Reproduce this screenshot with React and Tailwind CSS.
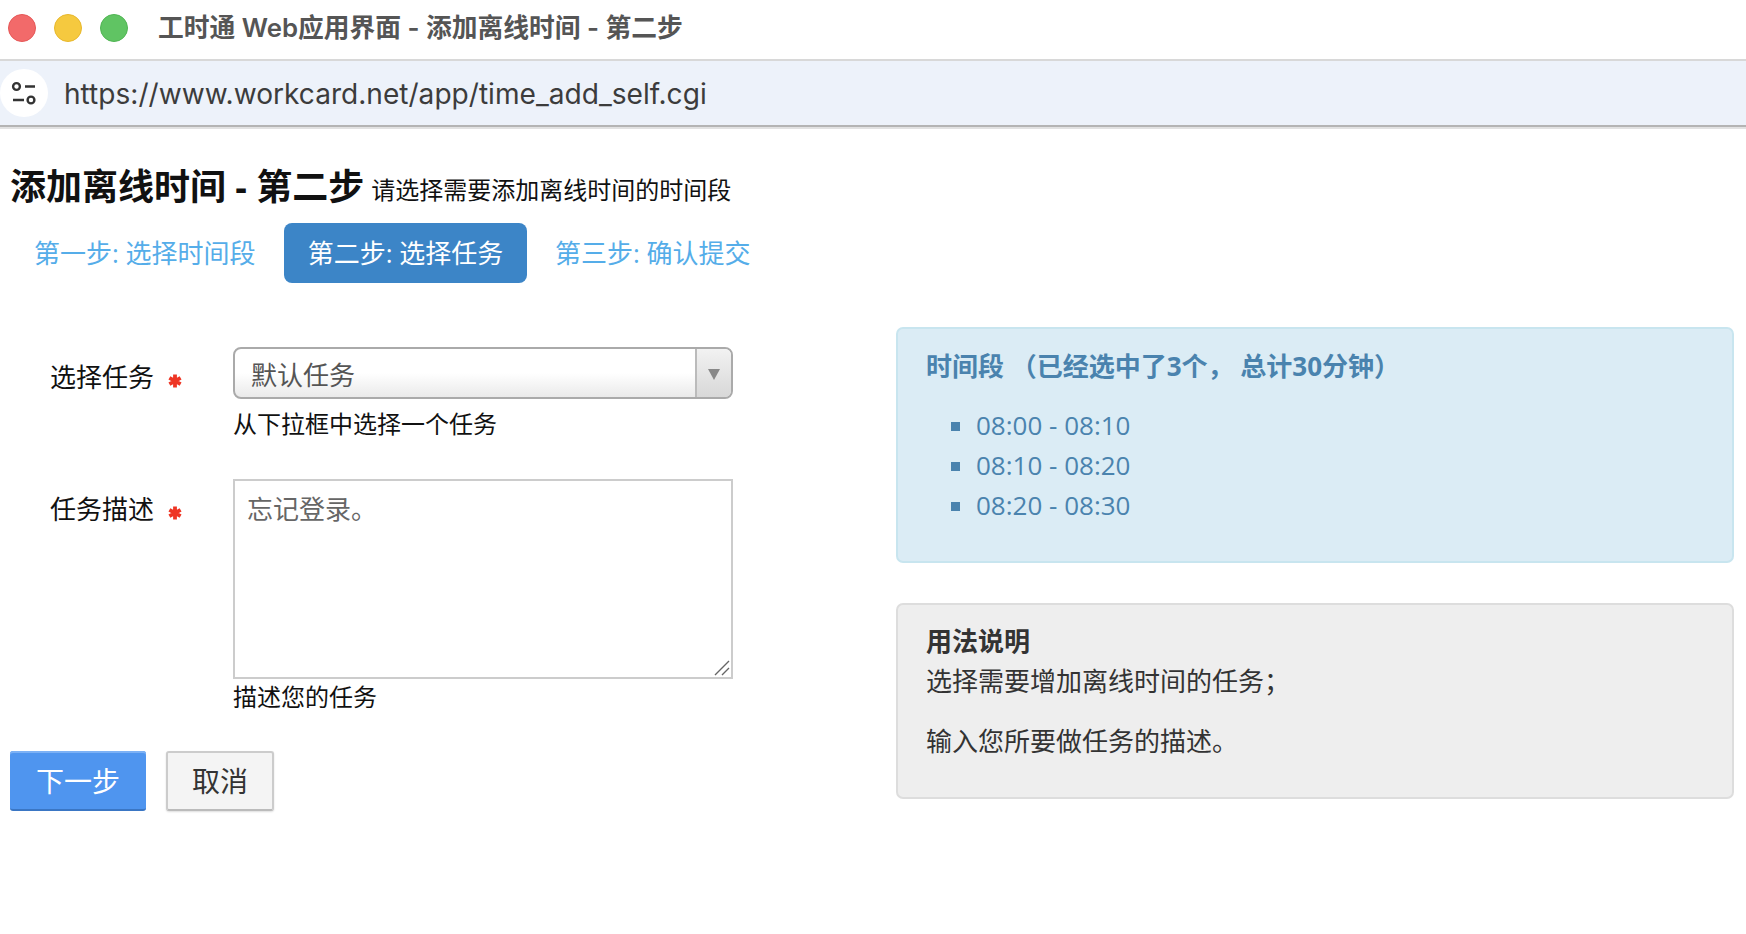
import React from "react";

const cjk = "font-['Open_Sans','Noto_Sans_CJK_SC',sans-serif]";

const slots = ["08:00 - 08:10", "08:10 - 08:20", "08:20 - 08:30"];

const Dot = ({ className }) => (
  <span className={`w-[28px] h-[28px] rounded-full border ${className}`} />
);

const Star = () => (
  <svg viewBox="0 0 14 14" className="w-[14px] h-[14px] ml-[14px] mt-[15px]" stroke="#ee3524" strokeWidth="3.8">
    <path d="M7 0.5V13.5M1.4 3.8L12.6 10.2M12.6 3.8L1.4 10.2" />
  </svg>
);

const Field = ({ label, children, help, className }) => (
  <div className={`flex ${className}`}>
    <label className="w-[223px] pl-[40px] pt-[12px] flex items-start text-[26px] leading-[36px] text-[#111]">
      {label}
      <Star />
    </label>
    <div className="w-[500px]">
      {children}
      <p className="text-[24px] leading-[32px] text-[#111]">{help}</p>
    </div>
  </div>
);

export default function App() {
  return (
    <div className={`min-h-[934px] bg-white ${cjk}`}>
      {/* window title */}
      <div className="h-[61px] flex items-center pl-[8px] pb-[3px] border-b-2 border-[#d8d8d8]">
        <div className="flex gap-[18px] -mt-[1px]">
          <Dot className="bg-[#f26a6a] border-[#e65858]" />
          <Dot className="bg-[#f5c93f] border-[#e8b82c]" />
          <Dot className="bg-[#60c463] border-[#50b553]" />
        </div>
        <h1 className="ml-[30px] text-[25.75px] font-semibold text-[#555] font-['Inter','Noto_Sans_CJK_SC',sans-serif]">
          工时通 Web应用界面 - 添加离线时间 - 第二步
        </h1>
      </div>

      {/* address bar */}
      <div className="h-[66px] flex items-center bg-[#edf2fa] border-b-[2px] border-[#b4b4b4] shadow-[0_2px_0_#e2e2e2]">
        <div className="w-[48px] h-[48px] rounded-full bg-white flex items-center justify-center">
          <svg viewBox="0 0 26 26" className="w-[26px] h-[26px]" fill="none" stroke="#333" strokeWidth="2.4">
            <circle cx="5.5" cy="6.5" r="3.4" />
            <path d="M14 6.5H24M2 20H13" />
            <circle cx="20" cy="20" r="3.4" />
          </svg>
        </div>
        <span className="ml-[16px] mt-[2px] text-[28.1px] text-[#3c3c3c] font-['Inter',sans-serif]">
          https://www.workcard.net/app/time_add_self.cgi
        </span>
      </div>

      <main className="px-[10px] pt-[36px]">
        <div className="flex items-end h-[48px]">
          <h2 className="text-[36px] leading-[48px] font-bold text-[#111]">添加离线时间 - 第二步</h2>
          <small className="ml-[7px] text-[24px] leading-[42px] text-[#111]">请选择需要添加离线时间的时间段</small>
        </div>

        {/* steps */}
        <div className="flex mt-[12px] text-[26px] text-[#55ade9]">
          <a className="h-[60px] w-[274px] pl-[24px] pt-[1px] flex items-center">第一步: 选择时间段</a>
          <a className="h-[60px] w-[243px] pt-[1px] rounded-[8px] bg-[#3c85c7] text-white flex items-center justify-center">第二步: 选择任务</a>
          <a className="h-[60px] pl-[28px] pt-[1px] flex items-center">第三步: 确认提交</a>
        </div>

        <div className="flex justify-between pr-[2px]">
          {/* form */}
          <div className="w-[723px] pt-[64px]">
            <Field label="选择任务" help="从下拉框中选择一个任务" className="items-start">
              <div className="h-[52px] flex rounded-[8px] border-2 border-[#aaa] bg-gradient-to-b from-white from-50% to-[#eaeaea] overflow-hidden mb-[9px]">
                <span className="flex-1 pl-[16px] text-[26px] leading-[53px] text-[#555]">默认任务</span>
                <span className="w-[36px] border-l-2 border-[#bbb] bg-gradient-to-b from-[#f2f2f2] to-[#d8d8d8] flex items-center justify-center">
                  <span className="w-0 h-0 mt-[2px] border-x-[6px] border-x-transparent border-t-[11px] border-t-[#888]" />
                </span>
              </div>
            </Field>

            <Field label="任务描述" help="描述您的任务" className="mt-[39px]">
              <div className="relative mb-[2px]">
                <textarea
                  defaultValue="忘记登录。"
                  className="block w-[500px] h-[200px] resize-none border-2 border-[#ccc] px-[12px] py-[10px] text-[26px] leading-[36px] text-[#666] outline-none"
                />
                <svg viewBox="0 0 16 16" className="absolute right-[3px] bottom-[3px] w-[16px] h-[16px]" stroke="#666" strokeWidth="1.4">
                  <path d="M1 15L15 1M8 15L15 8" />
                </svg>
              </div>
            </Field>

            <div className="flex gap-[20px] mt-[38px]">
              <button className="w-[136px] h-[60px] pt-[2px] rounded-[3px] bg-[#4f95ef] border-b-2 border-[#3a76c4] shadow-[inset_0_2px_0_#7cb1f5] text-white text-[28px]">
                下一步
              </button>
              <button className="w-[108px] h-[60px] rounded-[3px] bg-[#f4f4f4] border-2 border-[#ccc] border-b-[#bbb] shadow-[0_1px_2px_#ddd] text-[#333] text-[28px]">
                取消
              </button>
            </div>
          </div>

          {/* side panels */}
          <div className="w-[838px] pt-[44px]">
            <section className="h-[236px] rounded-[7px] border-2 border-[#c8e5ef] bg-[#dbecf5] px-[28px] pt-[19px] text-[#4a83ae]">
              <h3 className="text-[26px] leading-[36px] font-bold">时间段 （已经选中了3个， 总计30分钟）</h3>
              <ul className="mt-[21px] pl-[50px] text-[26px] leading-[40px] list-none">
                {slots.map((s) => (
                  <li key={s} className="relative">
                    <span className="absolute -left-[25px] top-[17px] w-[9px] h-[9px] bg-[#4a83ae]" />
                    {s}
                  </li>
                ))}
              </ul>
            </section>

            <section className="mt-[40px] h-[196px] rounded-[7px] border-2 border-[#ddd] bg-[#eeeeee] px-[28px] pt-[16px] text-[26px] leading-[40px] text-[#333]">
              <h3 className="font-bold">用法说明</h3>
              <p>选择需要增加离线时间的任务；</p>
              <p className="mt-[20px]">输入您所要做任务的描述。</p>
            </section>
          </div>
        </div>
      </main>
    </div>
  );
}
